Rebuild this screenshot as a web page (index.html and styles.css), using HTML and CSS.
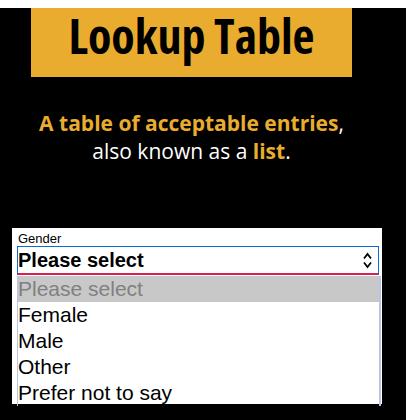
FILE: index.html
```html
<!DOCTYPE html>
<html>
<head>
<meta charset="utf-8">
<link rel="stylesheet" href="styles.css">
</head>
<body>
<div class="page">
  <header class="banner">
    <h1 class="title">Lookup Table</h1>
  </header>
  <p class="lead">
    <span class="hl">A table of acceptable entries</span>,<br>
    also known as a <span class="hl">list</span>.
  </p>
  <div class="form">
    <label class="label">Gender</label>
    <div class="select">
      <span class="select-text">Please select</span>
      <svg class="arrows" width="9" height="17" viewBox="0 0 9 17">
        <path d="M1 6.5 L4.5 2 L8 6.5" fill="none" stroke="#000" stroke-width="1.8"/>
        <path d="M1 10.5 L4.5 15 L8 10.5" fill="none" stroke="#000" stroke-width="1.8"/>
      </svg>
    </div>
    <ul class="options">
      <li class="option disabled">Please select</li>
      <li class="option">Female</li>
      <li class="option">Male</li>
      <li class="option">Other</li>
      <li class="option">Prefer not to say</li>
    </ul>
  </div>
</div>
</body>
</html>
```
FILE: styles.css
```css
html {
  background: #fff;
}
body {
  margin: 8px 0 0;
  background: #000;
  height: 412px;
  overflow: hidden;
}
.page {
  width: 383px;
}
.banner {
  margin-left: 31px;
  width: 321px;
  height: 69px;
  background: #e9ac2f;
  display: flex;
  justify-content: center;
  align-items: center;
}
.title {
  margin: 0;
  font-family: "Open Sans", sans-serif;
  font-weight: 700;
  font-stretch: 75%;
  font-size: 48px;
  line-height: 1;
  color: #000;
  padding-bottom: 14px;
}
.lead {
  margin: 32px 0 0;
  text-align: center;
  font-family: "Open Sans", sans-serif;
  font-size: 21px;
  font-weight: 400;
  line-height: 28px;
  color: #fff;
}
.hl {
  color: #e9ac2f;
  font-weight: 700;
}
.form {
  margin: 63px 0 0 12px;
  width: 370px;
  height: 176px;
  background: #fff;
  box-sizing: border-box;
  padding: 3px 0 0 5px;
  font-family: "Liberation Sans", Arial, sans-serif;
}
.label {
  display: block;
  font-size: 13px;
  line-height: 15px;
  color: #000;
  padding-left: 1px;
}
.select {
  width: 362px;
  height: 29px;
  box-sizing: border-box;
  border: 1px solid #0b6bd6;
  border-bottom: 2px solid #d7204f;
  display: flex;
  align-items: center;
  justify-content: space-between;
  padding: 0 6px 0 0;
}
.select-text {
  font-size: 20px;
  font-weight: 700;
  color: #000;
}
.options {
  list-style: none;
  margin: 1px 0 0;
  padding: 0;
  width: 364px;
  box-sizing: border-box;
  border-left: 1px solid #b7c6e3;
  border-right: 2px solid #b7c6e3;
}
.option {
  height: 26px;
  line-height: 26px;
  font-size: 21px;
  color: #000;
  padding-left: 0;
}
.option.disabled {
  background: #c8c8c8;
  color: #808080;
}
```
